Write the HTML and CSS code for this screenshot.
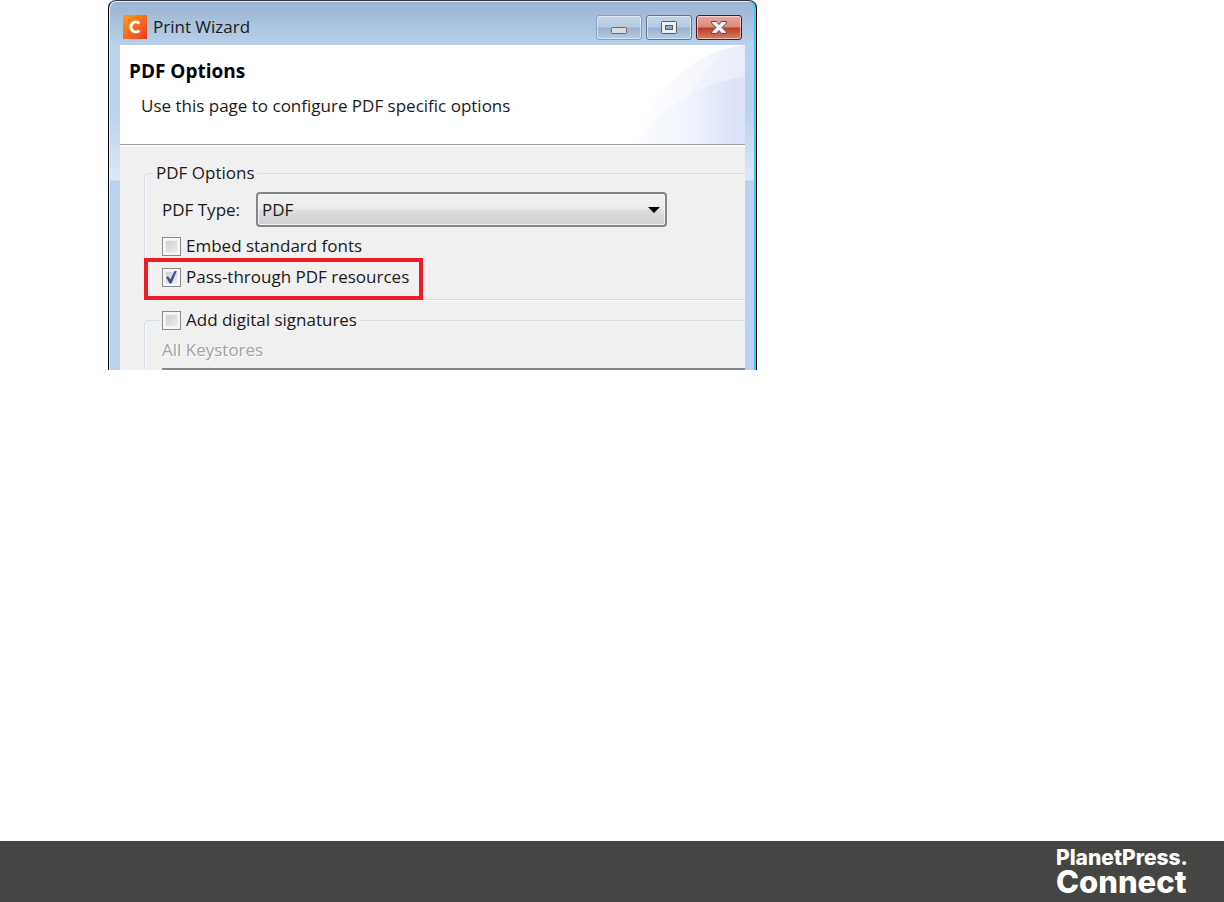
FILE: index.html
```html
<!DOCTYPE html>
<html lang="en">
<head>
    <meta charset="UTF-8">
    <meta name="viewport" content="width=device-width, initial-scale=1.0">
    <title>Print Wizard</title>
    <link rel="stylesheet" href="styles.css">
</head>
<body>
    <main class="page">
        <section class="window">
            <header class="titlebar">
                <svg class="app-icon" width="24" height="24" viewBox="0 0 24 24" aria-hidden="true">
                    <defs>
                        <linearGradient id="orange" x1="0" y1="0" x2="1" y2="1">
                            <stop offset="0" stop-color="#f8a01c"/>
                            <stop offset="1" stop-color="#ee3a24"/>
                        </linearGradient>
                    </defs>
                    <rect width="24" height="24" fill="url(#orange)"/>
                    <path d="M16.4 8.4A5 5 0 1 0 16.4 15.6" fill="none" stroke="#fff" stroke-width="3"/>
                </svg>
                <span class="title">Print Wizard</span>
                <div class="window-buttons">
                    <button class="win-btn minimize" type="button" aria-label="Minimize">
                        <svg width="46" height="25" viewBox="0 0 46 25">
                            <rect x="15.5" y="12.5" width="15" height="6" rx="1" fill="#dcdcdc" stroke="#6d6d78"/>
                        </svg>
                    </button>
                    <button class="win-btn" type="button" aria-label="Maximize">
                        <svg width="46" height="25" viewBox="0 0 46 25">
                            <rect x="15.500" y="6.500" width="15" height="12" rx="1" fill="#efefef" stroke="#5a5c6c"/>
                            <rect x="19.500" y="10.500" width="7" height="4" fill="#8fa9c8" stroke="#5a5c6c"/>
                        </svg>
                    </button>
                    <button class="win-btn close" type="button" aria-label="Close">
                        <svg width="46" height="25" viewBox="0 0 46 25">
                            <path d="M15.5 6.5h5l2.5 3 2.5-3h5v1.500l-4.500 4.500 4.500 4.500v1.500h-5l-2.500-3-2.500 3h-5v-1.500l4.500-4.500-4.500-4.500z" fill="#f4f4f4" stroke="#5c4a58"/>
                        </svg>
                    </button>
                </div>
            </header>

            <div class="banner">
                <h1>PDF Options</h1>
                <p>Use this page to configure PDF specific options</p>
                <svg class="banner-art" width="110" height="99" viewBox="0 0 110 99" aria-hidden="true">
                    <defs>
                        <linearGradient id="outer" x1="0" x2="1" y1="0" y2="0">
                            <stop offset="0" stop-color="#fff"/>
                            <stop offset="0.5" stop-color="#f8f9fd"/>
                            <stop offset="1" stop-color="#e8edf9"/>
                        </linearGradient>
                        <linearGradient id="inner" x1="0" x2="1" y1="0" y2="0">
                            <stop offset="0" stop-color="#fff"/>
                            <stop offset="0.6" stop-color="#eaeffa"/>
                            <stop offset="0.9" stop-color="#dce3f6"/>
                        </linearGradient>
                        <linearGradient id="band" x1="0" x2="1" y1="0" y2="0">
                            <stop offset="0" stop-color="#eef2fc"/>
                            <stop offset="1" stop-color="#e6ecf9"/>
                        </linearGradient>
                    </defs>
                    <path d="M0 99C14 52 55 6 110 0v99z" fill="url(#outer)"/>
                    <path d="M48 58C64 36 82 6 110 0v99H36z" fill="url(#band)" opacity="0.6"/>
                    <path d="M0 99C28 62 64 38 110 32v67z" fill="url(#inner)"/>
                </svg>
            </div>

            <form class="options">
                <fieldset class="group">
                    <legend>PDF Options</legend>
                    <div class="type-row">
                        <label for="pdfType">PDF Type:</label>
                        <div class="select">
                            <select id="pdfType">
                                <option>PDF</option>
                            </select>
                            <svg class="arrow" width="12" height="6" viewBox="0 0 12 6" aria-hidden="true">
                                <path d="M0 0h12L6 6z"/>
                            </svg>
                        </div>
                    </div>
                    <div class="check-row">
                        <label class="check"><input type="checkbox"> Embed standard fonts</label>
                    </div>
                    <div class="check-row">
                        <label class="check highlight"><input type="checkbox" checked> Pass-through PDF resources</label>
                    </div>
                </fieldset>

                <fieldset class="group signatures">
                    <legend><label class="check"><input type="checkbox"> Add digital signatures</label></legend>
                    <p class="disabled">All Keystores</p>
                    <div class="list"></div>
                </fieldset>
            </form>
        </section>
    </main>

    <footer class="footer">
        <div class="logo">
            <span class="logo-top">PlanetPress.</span>
            <span class="logo-bottom">Connect</span>
        </div>
    </footer>
</body>
</html>
```
FILE: styles.css
```css
* {
  box-sizing: border-box;
}

body {
  margin: 0;
  min-height: 100vh;
  display: flex;
  flex-direction: column;
  background: #fff;
  color: #1a1a1a;
  font-family: "Open Sans", "Noto Sans", sans-serif;
  font-size: 17px;
  line-height: 24px;
}

.page {
  flex: 1;
}

/* window frame */
.window {
  width: 53%;
  margin-left: 108px;
  padding: 0 11px;
  border: 1px solid #000;
  border-top-color: #38343c;
  border-bottom: 0;
  border-radius: 8px 8px 0 0;
  background: linear-gradient(#99b4d1 0, #b9d1ea 44px, #bbd2eb 110px, #dce9f6 179px, #b9d1ea 180px);
  box-shadow: inset -2px 0 #35d0f2, inset 1px 1px #dfeaf5;
}

.titlebar {
  display: flex;
  align-items: center;
  height: 44px;
  padding: 8px 3px 0;
}

.title {
  margin-left: 6px;
}

.window-buttons {
  display: flex;
  gap: 4px;
  margin-left: auto;
}

.win-btn {
  width: 46px;
  height: 25px;
  padding: 0;
  border: 1px solid #5f7591;
  border-radius: 3px;
  background: linear-gradient(#c2d4e7 0, #b5cbe2 48%, #98b2d0 52%, #b4cde6 100%);
  box-shadow: inset 0 0 0 1px rgba(255, 255, 255, 0.5);
}

.win-btn svg {
  display: block;
  margin: -1px;
}

.minimize {
  border-color: #86a0be;
}

.close {
  border-color: #4a1a20;
  background: linear-gradient(#e8a99f 0, #d98779 48%, #bb3b22 52%, #d8806a 100%);
}

/* banner */
.banner {
  position: relative;
  height: 102px;
  padding: 14px 9px 0;
  border-bottom: 2px solid #fafafa;
  background: linear-gradient(#fff 99px, #a0a0a0 99px);
}

.banner h1 {
  margin: 0;
  color: #000;
  font-size: 19px;
  line-height: 24px;
}

.banner p {
  margin: 11px 12px 0;
}

.banner-art {
  position: absolute;
  top: 0;
  right: 0;
}

/* options */
.options {
  padding: 14px 0 0 24px;
  background: #f0f0f0;
}

.group {
  min-width: 0;
  margin: 0;
  padding: 7px 0 10px 17px;
  border: 1px solid #d5dfe8;
  border-right: 0;
  border-radius: 4px 0 0 4px;
  box-shadow: inset 1px 0 #fafafa, 0 1px #fafafa;
}

.group legend {
  margin-left: -9px;
  padding: 0 3px;
}

.type-row {
  display: flex;
  align-items: center;
  gap: 16px;
}

.select {
  position: relative;
  flex: 1;
  margin-right: 78px;
}

.select select {
  display: block;
  width: 100%;
  height: 35px;
  padding: 0 4px;
  appearance: none;
  border: 2px solid #858585;
  border-radius: 4px;
  background: linear-gradient(#f3f3f3 0, #ebebeb 48%, #dddddd 52%, #cfcfcf 100%);
  box-shadow: inset 0 0 0 1px #f5f5f5;
  color: inherit;
  font: inherit;
}

.arrow {
  position: absolute;
  top: 15px;
  right: 7px;
  pointer-events: none;
}

.check-row {
  display: flex;
  margin-top: 7px;
}

.check {
  display: flex;
  align-items: center;
  gap: 5px;
}

.check input {
  width: 19px;
  height: 19px;
  margin: 0;
  padding: 3px;
  appearance: none;
  border: 1px solid #8a8b8d;
  background: linear-gradient(135deg, #c4c8ce, #f4f4f4);
  background-clip: content-box;
  box-shadow: inset 0 0 0 2px #f6f6f6;
}

.check input:checked::before {
  content: "";
  display: block;
  width: 11px;
  height: 13px;
  margin-top: -1px;
  background: #3c4f9c;
  clip-path: polygon(0 50%, 20% 46%, 40% 68%, 80% 0, 100% 0, 50% 100%, 32% 100%);
}

.highlight {
  position: relative;
}

.highlight::after {
  content: "";
  position: absolute;
  inset: -7px -14px -11px -18px;
  border: 4px solid #ee1c25;
}

.signatures {
  margin-top: 8px;
  padding-top: 6px;
  padding-bottom: 0;
  border-bottom: 0;
  border-radius: 4px 0 0 0;
  box-shadow: inset 1px 0 #fafafa;
}

.signatures legend {
  margin-left: -3px;
}

.disabled {
  margin: 0;
  color: #a3a3a3;
  text-shadow: 1px 1px #fff;
}

.list {
  margin-top: 6px;
  border-top: 2px solid #828790;
}

/* footer */
.footer {
  display: flex;
  justify-content: flex-end;
  height: 61px;
  padding: 6px 36px 0 0;
  background: #454643;
}

.logo {
  display: flex;
  flex-direction: column;
  color: #fff;
  font-family: Inter, "Open Sans", sans-serif;
  font-weight: 800;
}

.logo-top {
  font-size: 21px;
  line-height: 22px;
}

.logo-bottom {
  font-size: 31px;
  line-height: 26px;
}
```
